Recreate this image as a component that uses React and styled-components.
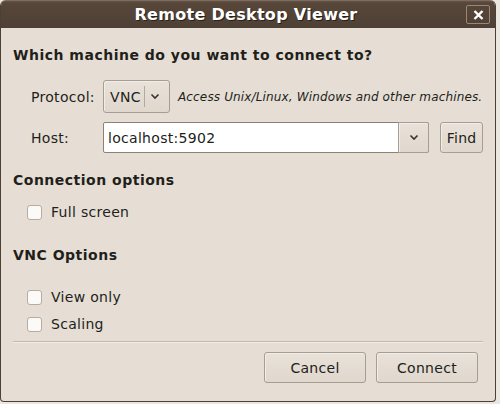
import React from 'react';
import styled, { createGlobalStyle } from 'styled-components';

const colors = {
  body: '#e6ded5',
  frame: '#4e3f35',
  title: '#594a3f',
  text: '#221e1a',
  border: '#a89d92',
  btn: '#e0d7cd',
};

const GlobalStyle = createGlobalStyle`
  html, body {
    margin: 0;
    padding: 0;
    background: #ece6e0;
  }
  body {
    font-family: "DejaVu Sans", "Liberation Sans", sans-serif;
    font-size: 14px;
    letter-spacing: 0.3px;
    color: ${colors.text};
  }
`;

const Window = styled.div`
  width: 494px;
  height: 401px;
  border: 1px solid ${colors.frame};
  border-top: none;
  border-radius: 6px 6px 4px 4px;
  background: ${colors.body};
  display: flex;
  flex-direction: column;
  overflow: hidden;
`;

const TitleBar = styled.div`
  height: 28px;
  flex: none;
  position: relative;
  display: flex;
  align-items: center;
  justify-content: center;
  background: linear-gradient(#66554a 0, #574739 2px, #4f4036 100%);
  border-top: 1px solid #7d6b5d;
  box-sizing: border-box;
`;

const Title = styled.div`
  font-weight: bold;
  font-size: 16px;
  color: #ffffff;
  text-shadow: 1px 1px 0 #2a201a;
  margin-left: -4px;
`;

const CloseButton = styled.div`
  position: absolute;
  right: 5px;
  top: 4px;
  width: 22px;
  height: 17px;
  border: 1px solid #9a8777;
  border-radius: 2px;
  display: flex;
  align-items: center;
  justify-content: center;
`;

const Content = styled.div`
  flex: 1;
  padding: 18px 12px 0 12px;
  display: flex;
  flex-direction: column;
`;

const Heading = styled.div`
  font-weight: bold;
  font-size: 14px;
  letter-spacing: 0.5px;
  line-height: 18px;
  margin-top: ${(p) => p.top}px;
`;

const FormRow = styled.div`
  display: flex;
  align-items: center;
  padding-left: 18px;
  margin-top: ${(p) => p.top}px;
`;

const Label = styled.div`
  width: 72px;
  flex: none;
`;

const Button = styled.div`
  box-sizing: border-box;
  height: ${(p) => p.h || 31}px;
  width: ${(p) => p.w}px;
  margin-left: ${(p) => p.gap || 0}px;
  border: 1px solid ${colors.border};
  border-radius: 3px;
  background: linear-gradient(#e9e2da, ${colors.btn});
  box-shadow: inset 1px 1px 0 #f2ede7;
  display: flex;
  align-items: center;
  justify-content: center;
`;

const Combo = styled(Button)`
  justify-content: flex-start;
  padding-left: 6px;
`;

const ComboSep = styled.div`
  width: 1px;
  align-self: stretch;
  margin: 5px 5px 5px 3px;
  background: #b4a99e;
`;

const Hint = styled.div`
  font-style: italic;
  font-size: 12px;
  letter-spacing: 0.15px;
  margin-left: 8px;
`;

const Entry = styled.div`
  box-sizing: border-box;
  width: 328px;
  height: 31px;
  border: 1px solid #8d8176;
  border-radius: 2px;
  background: #ffffff;
  display: flex;
  align-items: stretch;
`;

const EntryText = styled.div`
  flex: 1;
  display: flex;
  align-items: center;
  padding-left: 4px;
`;

const EntryArrow = styled(Button)`
  border-radius: 0 2px 2px 0;
  height: auto;
  margin: -1px -1px -1px 0;
`;

const Check = styled.div`
  display: flex;
  align-items: center;
  gap: 9px;
  padding-left: 14px;
  height: 20px;
  margin-top: ${(p) => p.top}px;
`;

const Box = styled.div`
  width: 13px;
  height: 13px;
  border: 1px solid #b5aca2;
  border-radius: 3px;
  background: #fbfaf8;
`;

const Separator = styled.div`
  height: 1px;
  margin-top: 7px;
  background: #c3b8ad;
  border-bottom: 1px solid #f2ede8;
`;

const ButtonBar = styled.div`
  display: flex;
  justify-content: flex-end;
  gap: 10px;
  margin-top: 9px;
  padding-right: 5px;
`;

const Chevron = () => (
  <svg width="10" height="7" viewBox="0 0 10 7">
    <path d="M1.5 1.5 L5 5 L8.5 1.5" fill="none" stroke="#3a332d" strokeWidth="1.6" />
  </svg>
);

const App = () => (
  <>
    <GlobalStyle />
    <Window>
      <TitleBar>
        <Title>Remote Desktop Viewer</Title>
        <CloseButton>
          <svg width="11" height="10" viewBox="0 0 11 10">
            <path d="M1.5 1 L9.5 9 M9.5 1 L1.5 9" stroke="#ffffff" strokeWidth="2.4" />
          </svg>
        </CloseButton>
      </TitleBar>
      <Content>
        <Heading top={0}>Which machine do you want to connect to?</Heading>
        <FormRow top={16}>
          <Label>Protocol:</Label>
          <Combo w={67} h={33}>
            VNC
            <ComboSep />
            <Chevron />
          </Combo>
          <Hint>Access Unix/Linux, Windows and other machines.</Hint>
        </FormRow>
        <FormRow top={9}>
          <Label>Host:</Label>
          <Entry>
            <EntryText>localhost:5902</EntryText>
            <EntryArrow w={31}>
              <Chevron />
            </EntryArrow>
          </Entry>
          <Button w={43} gap={11}>Find</Button>
        </FormRow>
        <Heading top={18}>Connection options</Heading>
        <Check top={13}>
          <Box />
          Full screen
        </Check>
        <Heading top={24}>VNC Options</Heading>
        <Check top={23}>
          <Box />
          View only
        </Check>
        <Check top={7}>
          <Box />
          Scaling
        </Check>
        <Separator />
        <ButtonBar>
          <Button w={102}>Cancel</Button>
          <Button w={102}>Connect</Button>
        </ButtonBar>
      </Content>
    </Window>
  </>
);

export default App;
